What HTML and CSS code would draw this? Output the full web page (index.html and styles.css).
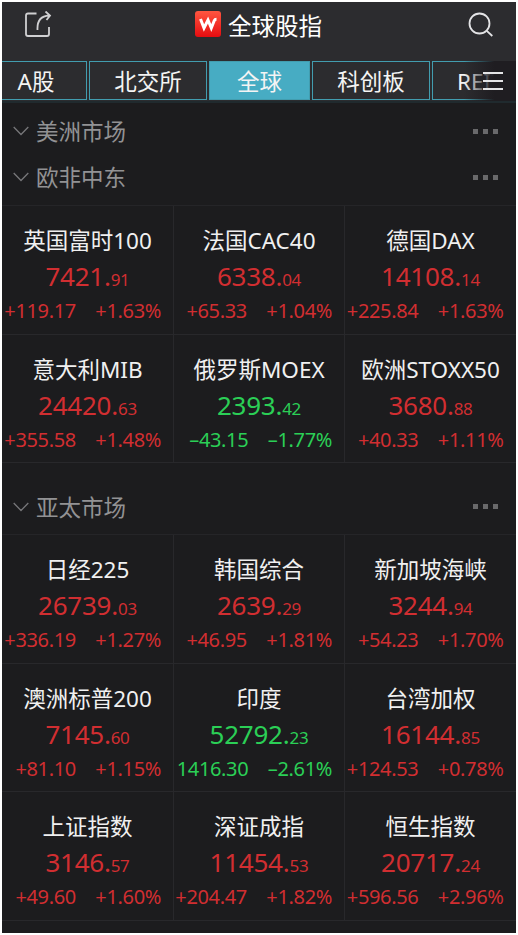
FILE: index.html
```html
<!DOCTYPE html>
<html lang="zh-CN">
<head>
<meta charset="utf-8">
<title>全球股指</title>
<link rel="stylesheet" href="styles.css">
</head>
<body>
<div class="app">
  <header class="header">
    <svg class="share" viewBox="0 0 28 28"><path d="M12.5 2.5H4Q2 2.5 2 4.5V23Q2 25 4 25H23Q25 25 25 23V16M13.5 19C13 10 17 5 25 4.5M21.5 .5L26 4.5L22.5 9"/></svg>
    <div class="brand"><span class="logo"><svg viewBox="0 0 26 26"><path d="M5.5 8L9 17L13 9L16.3 17L19.3 9.5Q19.8 8.2 21.5 8.2"/></svg></span><h1 class="title">全球股指</h1></div>
    <svg class="search" viewBox="0 0 26 26"><circle cx="11.5" cy="11.5" r="10"/><path d="M18.8 18.8L24.3 24"/></svg>
  </header>
  <nav class="tabs">
    <span class="tab first">A股</span><span class="tab">北交所</span><span class="tab active">全球</span><span class="tab">科创板</span><span class="tab last">REITs</span>
    <div class="fade"><svg viewBox="0 0 20 18"><path d="M0 1H20M0 9H20M0 17H20"/></svg></div>
  </nav>
  <main>
    <div class="group"><svg class="chev" viewBox="0 0 16 10"><path d="M.7 1L8 8.5L15.3 1"/></svg><h2>美洲市场</h2><div class="dots"><i></i><i></i><i></i></div></div>
    <div class="group"><svg class="chev" viewBox="0 0 16 10"><path d="M.7 1L8 8.5L15.3 1"/></svg><h2>欧非中东</h2><div class="dots"><i></i><i></i><i></i></div></div>
    <section class="grid">
      <div class="cell"><h3>英国富时100</h3><p class="price">7421.<small>91</small></p><p class="delta"><span>+119.17</span><span>+1.63%</span></p></div>
      <div class="cell"><h3>法国CAC40</h3><p class="price">6338.<small>04</small></p><p class="delta"><span>+65.33</span><span>+1.04%</span></p></div>
      <div class="cell"><h3>德国DAX</h3><p class="price">14108.<small>14</small></p><p class="delta"><span>+225.84</span><span>+1.63%</span></p></div>
      <div class="cell"><h3>意大利MIB</h3><p class="price">24420.<small>63</small></p><p class="delta"><span>+355.58</span><span>+1.48%</span></p></div>
      <div class="cell down"><h3>俄罗斯MOEX</h3><p class="price">2393.<small>42</small></p><p class="delta"><span>–43.15</span><span>–1.77%</span></p></div>
      <div class="cell"><h3>欧洲STOXX50</h3><p class="price">3680.<small>88</small></p><p class="delta"><span>+40.33</span><span>+1.11%</span></p></div>
    </section>
    <div class="group spaced"><svg class="chev" viewBox="0 0 16 10"><path d="M.7 1L8 8.5L15.3 1"/></svg><h2>亚太市场</h2><div class="dots"><i></i><i></i><i></i></div></div>
    <section class="grid">
      <div class="cell"><h3>日经225</h3><p class="price">26739.<small>03</small></p><p class="delta"><span>+336.19</span><span>+1.27%</span></p></div>
      <div class="cell"><h3>韩国综合</h3><p class="price">2639.<small>29</small></p><p class="delta"><span>+46.95</span><span>+1.81%</span></p></div>
      <div class="cell"><h3>新加坡海峡</h3><p class="price">3244.<small>94</small></p><p class="delta"><span>+54.23</span><span>+1.70%</span></p></div>
      <div class="cell"><h3>澳洲标普200</h3><p class="price">7145.<small>60</small></p><p class="delta"><span>+81.10</span><span>+1.15%</span></p></div>
      <div class="cell down"><h3>印度</h3><p class="price">52792.<small>23</small></p><p class="delta"><span>1416.30</span><span>–2.61%</span></p></div>
      <div class="cell"><h3>台湾加权</h3><p class="price">16144.<small>85</small></p><p class="delta"><span>+124.53</span><span>+0.78%</span></p></div>
      <div class="cell"><h3>上证指数</h3><p class="price">3146.<small>57</small></p><p class="delta"><span>+49.60</span><span>+1.60%</span></p></div>
      <div class="cell"><h3>深证成指</h3><p class="price">11454.<small>53</small></p><p class="delta"><span>+204.47</span><span>+1.82%</span></p></div>
      <div class="cell"><h3>恒生指数</h3><p class="price">20717.<small>24</small></p><p class="delta"><span>+596.56</span><span>+2.96%</span></p></div>
    </section>
  </main>
</div>
</body>
</html>
```
FILE: styles.css
```css
* { box-sizing: border-box; margin: 0; padding: 0; }
body { background: #fff; padding: 2px; font-family: "Noto Sans", "Noto Sans CJK SC", sans-serif; }
svg { fill: none; stroke: #e4e4e6; stroke-width: 1.8; display: block; }
.app { width: 514px; height: 931px; background: #1c1c1e; overflow: hidden; }
.header { height: 59px; background: #2c2c2f; display: flex; justify-content: space-between; padding: 9px 22px 0 22px; }
.share { width: 28px; height: 28px; stroke: #d0d0d2; }
.search { width: 26px; height: 26px; margin-top: 1px; }
.brand { display: flex; gap: 7px; height: 26px; align-items: center; margin-left: -3px; }
.logo { width: 26px; height: 26px; border-radius: 3px; background: linear-gradient(#ff5640, #e60c10); }
.logo svg { stroke: #fff; stroke-width: 3; }
.title { font-size: 23.5px; line-height: 26px; font-weight: 400; color: #fff; padding-top: 3px; }
.tabs { position: relative; height: 42px; background: #2c2c2f; border-bottom: 2px solid #202a2e; display: flex; gap: 2px; overflow: hidden; }
.tab { height: 39px; flex: none; width: 118px; border: 1.5px solid #429daf; color: #f4f4f4; font-size: 22.5px; line-height: 40px; text-align: center; }
.tab.first { width: 85px; border-left: 0; padding-right: 16px; }
.tab.active { width: 101px; background: #47acc3; }
.tab.last { text-align: left; padding-left: 24px; }
.fade { position: absolute; right: 0; top: 0; width: 52px; height: 41px; padding: 11px 0 0 19px; background: linear-gradient(90deg, #1f1d2100, #1f1d21 58%); }
.fade svg { width: 20px; height: 18px; }
.group { height: 46px; display: flex; align-items: center; padding: 0 18px 0 11px; }
main { padding-top: 5px; }
.chev { width: 16px; height: 10px; stroke: #77777a; stroke-width: 1.3; }
.group h2 { margin-left: 7px; padding-top: 2px; font-size: 22.5px; line-height: 30px; font-weight: 400; color: #929294; }
.dots { margin-left: auto; display: flex; gap: 5px; }
.dots i { width: 5px; height: 5px; background: #69696b; }
.group.spaced { height: 71px; padding-top: 16px; }
.group:not(.spaced) + .grid { margin-top: 5px; }
.grid { display: grid; grid-template-columns: 172px 171px 171px; border-top: 1px solid #252528; }
.cell { height: 128.5px; border-bottom: 1px solid #28282b; border-right: 1px solid #28282b; color: #d12e31; white-space: nowrap; padding-top: 19px; }
.cell:nth-child(3n) { border-right: 0; }
.cell.down { color: #2bcf56; }
.cell h3 { font-size: 22.5px; line-height: 32px; font-weight: 400; color: #f0f0f0; text-align: center; }
.price { font-size: 26px; line-height: 36px; margin-top: 1px; text-align: center; letter-spacing: -.25px; }
.price small { font-size: 17px; }
.delta { display: flex; justify-content: flex-end; gap: 19.5px; padding-right: 12px; font-size: 20px; line-height: 28px; letter-spacing: -.35px; margin-top: -1px; }
.cell:nth-child(3n) .delta { padding-right: 12.5px; }
```
